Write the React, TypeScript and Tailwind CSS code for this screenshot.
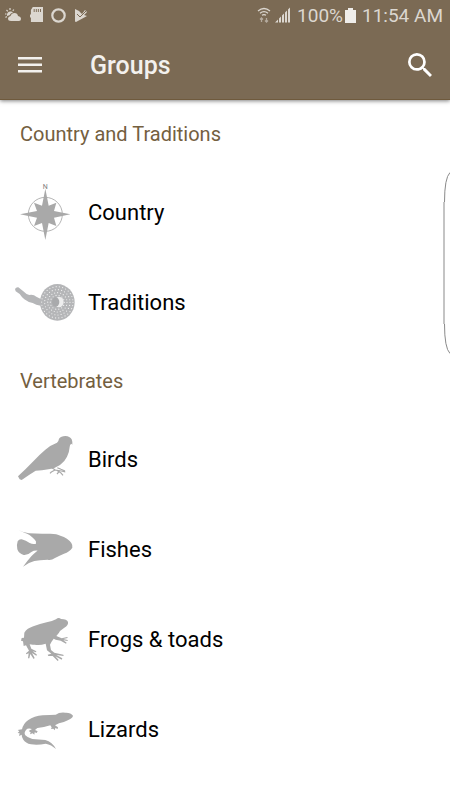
import type { ReactNode } from "react";

const compass = (
  <svg viewBox="45 39 180 180" className="size-full" fill="#a9a9a9">
    <circle cx="136" cy="133" r="51" fill="none" stroke="#b5b5b5" strokeWidth="3" />
    <path d="M136 56 L146 107 L169 98 L162 123 L211 133 L162 143 L169 168 L146 159 L136 210 L126 159 L102 168 L111 143 L60 133 L111 123 L102 98 L126 107Z" />
    <text x="136" y="56" textAnchor="middle" fontSize="21" fontFamily="Roboto, sans-serif" fill="#7f7f7f">
      N
    </text>
  </svg>
);

const rings = [
  { r: 47, dash: "0 9.84" },
  { r: 38, dash: "0 9.55" },
  { r: 29, dash: "0 9.11" },
  { r: 21, dash: "0 9.43" },
];

const traditions = (
  <svg viewBox="45 9 180 180" className="size-full" fill="#b5b6b8">
    <path d="M45 57 Q48 51 55 52 L70 64 Q77 72 88 75 Q101 73 109 80 L124 88 L122 107 Q108 105 98 99 Q83 96 73 88 Q64 80 59 72 L47 64Z" />
    <ellipse cx="172" cy="97" rx="52" ry="55" />
    {rings.map((ring) => (
      <circle
        key={ring.r}
        cx="172"
        cy="97"
        r={ring.r}
        fill="none"
        stroke="#f1f1f1"
        strokeWidth="3.6"
        strokeLinecap="round"
        strokeDasharray={ring.dash}
      />
    ))}
    <circle cx="173" cy="97" r="17" />
    <ellipse cx="177" cy="96" rx="14" ry="16" fill="#eeeeee" />
    <ellipse cx="167" cy="96" rx="11" ry="14" fill="#a9aaac" />
  </svg>
);

const bird = (
  <svg viewBox="45 15 180 180" className="size-full" fill="#a9a9a9">
    <path d="M54 154 L77 132 L100 109 Q119 88 136 74 Q154 59 171 53 Q176 49 177 41 Q183 33 196 33 Q210 34 215 43 Q218 51 217 59 L214 56 Q209 59 209 66 Q208 82 201 95 Q194 110 180 120 Q165 130 150 132 L126 136 L107 137 L87 150 L65 165 L59 163Z" />
    <path
      d="M153 127 L166 135 L184 138 L196 141 M165 135 L154 141 L150 145 M170 136 L182 143 L189 151 M172 128 L183 133 L195 138 M178 139 L171 147"
      fill="none"
      stroke="#a9a9a9"
      strokeWidth="3.5"
      strokeLinejoin="round"
    />
  </svg>
);

const fish = (
  <svg viewBox="45 0 180 180" className="size-full" fill="#a9a9a9">
    <path d="M55 30 Q70 38 87 40 Q117 42 145 41 Q170 40 181 47 Q204 54 214 69 Q219 77 217 83 Q209 95 192 101 Q178 107 165 114 Q153 122 143 119 Q118 120 103 123 Q84 128 69 140 Q82 123 94 109 Q107 95 113 92 Q102 91 94 96 Q84 106 71 105 Q56 101 52 88 Q49 75 53 64 Q57 57 65 58 Q78 61 89 69 Q99 74 108 71 Q110 63 103 58 Q91 43 73 38Z" />
  </svg>
);

const frog = (
  <svg viewBox="45 15 180 180" className="size-full" fill="#a9a9a9">
    <path d="M73 83 Q81 70 100 64 Q120 57 140 52 Q157 49 168 43 Q176 35 183 42 Q201 42 204 51 Q206 61 193 68 L180 78 Q177 85 169 93 L185 100 L202 96 L203 99 L190 102 L203 105 L203 108 L190 106 L200 113 L198 116 L182 107 L167 104 L161 101 Q154 110 150 119 L153 135 L163 143 L190 149 L191 153 L169 150 L187 160 L185 164 L166 154 L176 165 L173 168 L158 153 L145 153 L143 149 L154 146 L141 136 L137 116 Q120 122 104 119 Q95 120 89 118 L94 131 L109 139 L108 142 L98 139 L111 149 L109 152 L96 144 L104 159 L101 162 L91 147 L88 160 L84 160 L86 145 L79 148 L78 145 L87 137 L78 121 L71 123 L69 109 L63 107 L65 99 L72 98Z" />
  </svg>
);

const lizard = (
  <svg viewBox="45 0 180 180" className="size-full" fill="#a9a9a9">
    <path d="M219 47 Q218 54 205 60 Q192 67 177 70 L165 76 L174 82 L173 87 L166 84 L164 91 L160 86 L153 87 L155 82 L151 76 Q132 82 112 84 L105 90 L113 94 L110 99 L104 97 L103 104 L98 100 L90 103 L92 97 L86 93 L96 87 Q83 83 78 90 Q71 99 76 106 Q82 113 97 117 Q116 118 136 120 Q157 126 168 147 Q154 134 137 131 Q114 136 93 133 Q76 129 70 119 Q65 112 65 104 L57 108 L59 100 L53 99 L58 94 L53 90 L66 88 Q70 71 84 61 Q103 48 128 46 Q151 45 167 44 Q178 36 196 38 Q212 37 219 47Z" />
  </svg>
);

type Item = { name: string; icon: ReactNode };

const sections: { title: string; items: Item[] }[] = [
  {
    title: "Country and Traditions",
    items: [
      { name: "Country", icon: compass },
      { name: "Traditions", icon: traditions },
    ],
  },
  {
    title: "Vertebrates",
    items: [
      { name: "Birds", icon: bird },
      { name: "Fishes", icon: fish },
      { name: "Frogs & toads", icon: frog },
      { name: "Lizards", icon: lizard },
    ],
  },
];

function StatusBar() {
  return (
    <div className="flex h-[30px] items-center justify-between pl-1 pr-[7px] text-[#dcd7d0]">
      <div className="flex items-center gap-2">
        <svg viewBox="0 0 18 16" className="h-4 w-[18px]" fill="currentColor">
          <path d="M7 14 Q4 14 4 11.500 Q4 9.500 6.500 9 Q7.500 6 10.500 6 Q13.500 6 14 9 Q17 9.500 17 12 Q17 14 15 14Z" />
          <path d="M3 9 Q2.500 5 6 4.500 Q8 4 9 5.500 Q6.500 6 5.500 8.300Z" />
          <path d="M6 1v2M2.500 3l1.300 1.300M1 7h1.500M9.800 2.500l-1 1.300M1.500 10.500l1.300-1" stroke="currentColor" strokeWidth="1.200" />
        </svg>
        <svg viewBox="0 0 14 16" className="h-4 w-[13px]" fill="currentColor" preserveAspectRatio="none">
          <path d="M3 0h11v15H1v-4L0 10V8l1-1V3Z" />
          <path d="M4.500 2v3M6.800 2v3M9 2v3M11.300 2v3" stroke="#7b6a54" strokeWidth="1" />
        </svg>
        <svg viewBox="0 0 15 15" className="size-[15px]" fill="none" stroke="currentColor" strokeWidth="2.200">
          <circle cx="7.500" cy="7.500" r="6.200" />
        </svg>
        <svg viewBox="0 0 14 15" className="h-[15px] w-3.5" fill="currentColor">
          <path d="M1 1 L5 3 L8 6 L11 2 L13 4 L10 7 L13 8 L2 14 Q1 14 1 13Z" />
          <path d="M3 6 L6 9 L12.500 2.500" fill="none" stroke="#7b6a54" strokeWidth="1" />
        </svg>
      </div>
      <div className="flex items-center text-[19px] leading-6">
        <svg viewBox="0 0 14 16" className="h-4 w-3.5" fill="none" stroke="currentColor" strokeWidth="1.300">
          <path d="M1 4 Q7 -1 13 4M3 6.300 Q7 3 11 6.300M5 8.300 Q7 7 9 8.300" />
          <path d="M4.500 15v-4M3 12.500l1.500-1.500L6 12.500M9.500 11v4M8 13.500l1.500 1.500 1.500-1.500" opacity="0.6" />
        </svg>
        <svg viewBox="0 0 16 16" className="ml-1 h-4 w-4" fill="currentColor">
          <path d="M0 15.500 L3 12.500V15.500ZM4 15.500V11.500L6 9.500V15.500ZM7 15.500V8.500L9 6.500V15.500ZM10 15.500V5.500L12 3.500V15.500ZM13 15.500V2.500L15 .5V15.500Z" />
        </svg>
        <span className="ml-1.5 pt-0.5">100%</span>
        <svg viewBox="0 0 11 15" className="ml-0.5 h-[15px] w-[11px]" fill="#efedea">
          <path d="M3 0h5v2h3v13H0V2h3Z" />
        </svg>
        <span className="ml-1.5 pt-0.5">11:54 AM</span>
      </div>
    </div>
  );
}

export default function App() {
  return (
    <div className="relative min-h-screen overflow-hidden bg-white font-[Roboto,sans-serif]">
      <header className="border-b border-[#6f5a3d] bg-[#7b6a54] shadow-[0_1px_4px_rgba(0,0,0,0.5)]">
        <StatusBar />
        <div className="flex h-[69px] items-center px-[18px] pt-px">
          <button type="button" aria-label="Open menu" className="text-[#f3f1ee]">
            <svg viewBox="0 0 24 18" className="h-[18px] w-6" fill="currentColor">
              <path d="M0 1h24v2.500H0zM0 7.500h24V10H0zM0 14h24v2.500H0z" />
            </svg>
          </button>
          <h1 className="ml-12 flex-1 pt-0.5 text-[25px] font-medium leading-8 text-[#f3f1ee]">Groups</h1>
          <button type="button" aria-label="Search" className="text-white">
            <svg viewBox="3 3 17.500 17.500" className="size-6" fill="currentColor">
              <path d="M15.500 14h-.79l-.28-.27A6.470 6.470 0 0 0 16 9.500 6.500 6.500 0 1 0 9.500 16c1.610 0 3.090-.59 4.230-1.570l.27.28v.79l5 4.990L20.490 19l-4.990-5zm-6 0C7.010 14 5 11.990 5 9.500S7.010 5 9.500 5 14 7.010 14 9.500 11.990 14 9.500 14z" />
            </svg>
          </button>
        </div>
      </header>
      <main className="pt-px">
        {sections.map((section) => (
          <section key={section.title}>
            <h2 className="flex h-[67px] items-center px-5 pb-0.5 text-xl text-[#74603f]">{section.title}</h2>
            <ul>
              {section.items.map((item) => (
                <li key={item.name}>
                  <a href="#" className="flex h-[90px] items-center gap-[13px] px-[15px] text-[22px] text-black">
                    <span className="size-[60px] shrink-0">{item.icon}</span>
                    <span className="pb-0.5">{item.name}</span>
                  </a>
                </li>
              ))}
            </ul>
          </section>
        ))}
      </main>
      <svg
        viewBox="0 0 8 182"
        className="absolute right-0 top-[172px] h-[182px] w-2"
        fill="none"
        stroke="#8a8a8a"
        strokeWidth="1"
        aria-hidden="true"
      >
        <path d="M8 .5 Q2.500 6 2.500 30 M2.500 152 Q2.500 176 8 181.500" />
        <path d="M2 30 V152" stroke="#c4c4c4" strokeWidth="2" />
      </svg>
    </div>
  );
}
